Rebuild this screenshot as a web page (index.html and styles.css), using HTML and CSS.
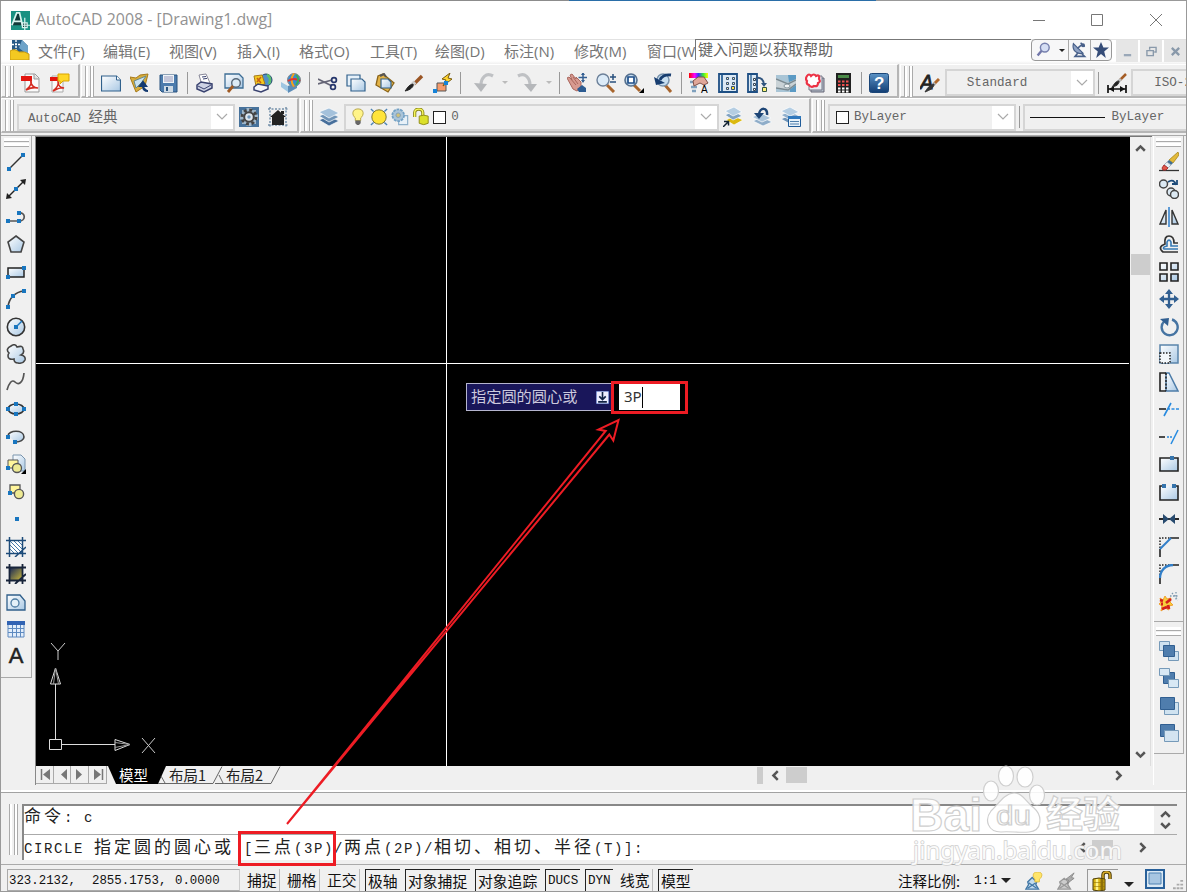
FILE: index.html
```
<!DOCTYPE html>
<html lang="zh-CN">
<head>
    <meta charset="UTF-8" />
    <meta name="viewport" content="width=device-width, initial-scale=1.0" />
    <title>AutoCAD 2008 - [Drawing1.dwg]</title>
    <link rel="stylesheet" href="styles.css">
</head>
<body>
    <!-- icon sprite -->
    <svg class="sprite">
        <defs>
            <linearGradient id="gBlue" x1="0" y1="0" x2="1" y2="1"><stop offset="0" stop-color="#fff"/><stop offset="1" stop-color="#a9c8e4"/></linearGradient>
            <linearGradient id="gDark" x1="0" y1="0" x2="1" y2="1"><stop offset="0" stop-color="#1c2a55"/><stop offset="1" stop-color="#c9b73c"/></linearGradient>
            <linearGradient id="gHelp" x1="0" y1="0" x2="0" y2="1"><stop offset="0" stop-color="#5b93c6"/><stop offset="1" stop-color="#123e74"/></linearGradient>
            <linearGradient id="gRain" x1="0" y1="0" x2="1" y2="0"><stop offset="0" stop-color="#f00"/><stop offset=".3" stop-color="#f0f"/><stop offset=".5" stop-color="#33f"/><stop offset=".75" stop-color="#3e3"/><stop offset="1" stop-color="#ff0"/></linearGradient>
        </defs>
        <symbol id="pdf" viewBox="0 0 20 20"><path d="M4 1h10l4 4v14H4z" fill="#fafafa" stroke="#999"/><path d="M13 1v5h5" fill="#ddd" stroke="#999"/><path d="M0 3h11v5H0z" fill="#e3150f"/><path d="M5 17c4-3 6-6 5-10-1 5 3 8 7 8-4-1-8 0-12 2" fill="none" stroke="#d42a20" stroke-width="1.600"/></symbol>
        <symbol id="pdf-note" viewBox="0 0 20 20"><path d="M2 3h11v16H2z" fill="#fafafa" stroke="#aaa"/><path d="M0 4h9v4H0z" fill="#e3150f"/><path d="M3 18c4-3 6-6 5-10 0 5 3 7 6 7-4-1-7 1-11 3" fill="none" stroke="#d42a20" stroke-width="1.600"/><path d="M8 1h11v7h-6l-3 3V8H8z" fill="#ffd727" stroke="#d9a400"/></symbol>
        <symbol id="new" viewBox="0 0 20 20"><path d="M.5 3h15l4 4v11H.5z" fill="url(#gBlue)" stroke="#31618c" stroke-width="1.200"/><path d="M15.500 3v4h4" fill="#fff" stroke="#31618c"/></symbol>
        <symbol id="open" viewBox="0 0 20 20"><path d="M0 4l6 1 4-3 8-1-3 12-9 6z" fill="#d6ad3d" stroke="#a77a1a"/><path d="M4 8l12-5-4 6-6 6z" fill="#c9e2f2" stroke="#688"/><path d="M18 18c-3 0-5-1-5-5M10 13l3-4 3 4z" fill="#133a70" stroke="#133a70" stroke-width="2"/></symbol>
        <symbol id="save" viewBox="0 0 20 20"><path d="M1 2h17v17H3l-2-2z" fill="#4d7cad" stroke="#28537f"/><path d="M4 2h11v8H4z" fill="#eef4f8"/><path d="M5 4h9M5 6h9M5 8h9" stroke="#99b"/><path d="M5 13h9v6H5z" fill="#cfdbe5"/><path d="M7 14h2v4H7z" fill="#28537f"/></symbol>
        <symbol id="print" viewBox="0 0 20 20"><path d="M4 2l7-1 4 9-8 2z" fill="#fff" stroke="#889"/><path d="M2 12l4-3 11 2v4l-8 4-7-3z" fill="#cdd2e4" stroke="#39426f" stroke-width="1.500"/><path d="M3 13l6 3 7-4M7 4l4-.5M8 6l4-.6" fill="none" stroke="#39426f"/></symbol>
        <symbol id="preview" viewBox="0 0 20 20"><path d="M1 1h14l4 4v10H1z" fill="url(#gBlue)" stroke="#3d6d95" stroke-width="1.300"/><circle cx="12" cy="10" r="4.300" fill="#dcebf5" stroke="#567" stroke-width="1.400"/><path d="M9 13l-5 6" stroke="#a05a23" stroke-width="2.800"/></symbol>
        <symbol id="publish" viewBox="0 0 20 20"><circle cx="13" cy="7" r="6" fill="#4f8fca" stroke="#246"/><path d="M14 2c3 1 4 5 2 9" stroke="#5bc06b" stroke-width="2.500" fill="none"/><path d="M1 3l8-1 3 9-9 2z" fill="#f4c91f" stroke="#a77a1a"/><path d="M4 5l4 5M8 4l-4 5" stroke="#c86010" stroke-width="1.500"/><path d="M1 14l4-3 10 2v3l-7 3-7-2z" fill="#f5f6fb" stroke="#39426f" stroke-width="1.500"/></symbol>
        <symbol id="dwf" viewBox="0 0 20 20"><path d="M0 9l7 4v6l-7-5z" fill="#9fc6e2"/><path d="M7 13l9-4v6l-9 5z" fill="#5d8db8"/><circle cx="13" cy="7" r="6.500" fill="#3b8bd0" stroke="#888"/><path d="M13 .5c-3 4-3 9 0 13" stroke="#f5a11c" stroke-width="2" fill="none"/><path d="M7 8q6-4 12 0" stroke="#d33" stroke-width="2" fill="none"/><path d="M15 2c3 2 3 6 0 10" fill="none" stroke="#3bb050" stroke-width="2"/></symbol>
        <symbol id="cut" viewBox="0 0 20 20"><path d="M0 6l14 7M0 11l14-4" stroke="#667" stroke-width="1.700"/><circle cx="16" cy="7" r="2.400" fill="none" stroke="#26366c" stroke-width="1.700"/><circle cx="15" cy="14" r="2.400" fill="none" stroke="#26366c" stroke-width="1.700"/></symbol>
        <symbol id="copy" viewBox="0 0 20 20"><path d="M1 2h13v11H1z" fill="#e6f1fa" stroke="#31618c" stroke-width="1.200"/><path d="M5 6h11l3 3v9H5z" fill="url(#gBlue)" stroke="#31618c" stroke-width="1.200"/></symbol>
        <symbol id="paste" viewBox="0 0 20 20"><path d="M8 1l11 9-6 9-12-7 2-9z" fill="#e3b347" stroke="#8b6418" stroke-width="1.300"/><path d="M6 6h7l3 3v6H6z" fill="url(#gBlue)" stroke="#31618c" stroke-width="1.200"/><path d="M5 3l4-2 2 3" fill="none" stroke="#555" stroke-width="2"/></symbol>
        <symbol id="brush" viewBox="0 0 20 20"><path d="M18 3l-8 8" stroke="#9a5524" stroke-width="3.400"/><path d="M11 9l-3 3" stroke="#ccc" stroke-width="4"/><path d="M9 11c1 3-3 6-8 7 2-2 3-6 8-7" fill="#222" stroke="#222"/></symbol>
        <symbol id="block" viewBox="0 0 20 20"><path d="M4 10h9v8H4z" fill="#f59b6c" stroke="#555"/><path d="M17 0L9 6l4 1-3 6 9-7-4-1z" fill="#ffd52d" stroke="#775a12"/><path d="M0 16h4v4H0zM11 8h4v4h-4z" fill="#1583d8"/></symbol>
        <symbol id="undo" viewBox="0 0 20 20"><path d="M19 3C12-1 7 5 7 12" fill="none" stroke="#bfc1c4" stroke-width="3.200"/><path d="M0 10l13 1-6 8z" fill="#b5b7ba"/></symbol>
        <symbol id="redo" viewBox="0 0 20 20"><path d="M1 3c7-4 12 2 12 9" fill="none" stroke="#bfc1c4" stroke-width="3.200"/><path d="M7 11h13l-6 8z" fill="#b5b7ba"/></symbol>
        <symbol id="pan" viewBox="0 0 20 20"><path d="M0 5l2-1 3 3-2-5 2-1 4 5 0-2 5 5 0 6-4 3-4-2z" fill="#d89a90" stroke="#a9665d"/><path d="M3 5l6 7M6 4l5 7" stroke="#a9665d"/><path d="M10 16l5-4 4 3v4h-7z" fill="#2c5b91"/><path d="M16 0v9M11.500 4.500h9" stroke="#345f92" stroke-width="1.500"/><path d="M16-1l2 3h-4zM16 10l2-3h-4z" fill="#345f92"/></symbol>
        <symbol id="zoom-rt" viewBox="0 0 20 20"><path d="M11 12l7 7" stroke="#a8652d" stroke-width="3"/><circle cx="7" cy="7" r="6" fill="#dcebf8" stroke="#6c8099" stroke-width="1.400"/><path d="M17 1v6M14 4h6M14 9h6" stroke="#29507d" stroke-width="1.500"/></symbol>
        <symbol id="zoom-win" viewBox="0 0 20 20"><path d="M10 12l6 6" stroke="#a8652d" stroke-width="3"/><circle cx="7" cy="7" r="6" fill="#c8dff1" stroke="#55708f" stroke-width="1.600"/><path d="M4 4h6v6H4z" fill="#fff" stroke="#1f4f8a" stroke-width="1.700"/><path d="M20 15v5h-5z"/></symbol>
        <symbol id="zoom-prev" viewBox="0 0 20 20"><path d="M12 12l6 7" stroke="#a8652d" stroke-width="3"/><circle cx="10" cy="7" r="6" fill="#c8dff1" stroke="#7892ac" stroke-width="1.500"/><path d="M18 2c-6-1-10 2-11 5" fill="none" stroke="#173d70" stroke-width="2.800"/><path d="M1 4l11 6-9 2z" fill="#173d70"/></symbol>
        <symbol id="center" viewBox="0 0 20 20"><path d="M1 1h18v18H1z" fill="#dce9f4" stroke="#1e4f84" stroke-width="1.800"/><path d="M4 2v16" stroke="#3c6f9f" stroke-width="2"/><g fill="#f7f1b0" stroke="#354f72"><path d="M8.500 4.500h2v2h-2zM14.500 4.500h2v2h-2zM8.500 9.500h2v2h-2zM14.500 9.500h2v2h-2zM8.500 14.500h2v2h-2z"/><path d="M13.500 13.500h3v3h-3z" fill="#ffe135"/></g></symbol>
        <symbol id="palette" viewBox="0 0 20 20"><path d="M1 1h9v18H1z" fill="#dce9f4" stroke="#1e4f84" stroke-width="1.800"/><path d="M4 2v16" stroke="#3c6f9f" stroke-width="1.500"/><path d="M6.500 5.500h2v2h-2zM6.500 10.500h2v2h-2zM6.500 15.500h2v2h-2z" fill="#fff" stroke="#345"/><path d="M9 5c5-1 8 2 8 7" fill="none" stroke="#30557f" stroke-width="2"/><path d="M14 10h6l-3 4z" fill="#30557f"/><path d="M15.500 14.500h4v4h-4z" fill="#fff176" stroke="#354"/></symbol>
        <symbol id="sheet" viewBox="0 0 20 20"><path d="M0 2h20v17H0z" fill="#a9c5d6"/><path d="M12 2h8v5l-7 2zM14 15l6-4v8h-6z" fill="#5b9ac4"/><path d="M0 5l12 5 8-4v6l-7 5-13-1z" fill="#c9d2d6"/><path d="M0 6l12 5 8-4M0 15l12 2 8-6" fill="none" stroke="#7a8a92" stroke-width="1.500"/><ellipse cx="11" cy="13" rx="3" ry="2" fill="#f2f4f5" stroke="#83949c"/></symbol>
        <symbol id="markup" viewBox="0 0 20 20"><path d="M6 5h13v14H6z" fill="#b3bec9" stroke="#667"/><path d="M4 3h13v14H4z" fill="#e7edf2" stroke="#778"/><path d="M2 3q2-3 4 0 3-3 5 0 4-2 3 3 2 3-1 4 0 4-4 3-3 2-5-1-3-1-2-4-2-2 0-5z" fill="#fff" stroke="#ec3245" stroke-width="2.200"/></symbol>
        <symbol id="calc" viewBox="0 0 20 20"><path d="M3 0h15v20H3z" fill="#202020"/><path d="M5 2h11v3H5z" fill="#4a8a48"/><g stroke-dasharray="2.500 1.500" stroke-width="2"><path d="M5 8.500h11M5 12h11" stroke="#f05050"/><path d="M5 15.500h11M5 18.500h11" stroke="#fff"/></g></symbol>
        <symbol id="dimstyle" viewBox="0 0 20 20"><path d="M1 12v8M19 12v8M1 16h18" fill="none" stroke="#111" stroke-width="1.700"/><path d="M2 16l5-3v6zM18 16l-5-3v6z" fill="#111"/><path d="M19 1l-6 6" stroke="#a55d25" stroke-width="2.500"/><path d="M14 6l-3 3" stroke="#bbb" stroke-width="3"/><path d="M12 8c0 4-3 5-7 6 2-2 3-6 7-6" fill="#222" stroke="#333"/></symbol>
        <symbol id="gear" viewBox="0 0 20 20"><path d="M0 0h20v20H0z" fill="#47729b"/><path d="M3 3h14v14H3z" fill="#9fb6c9"/><path d="M10 1v18M1 10h18" stroke="#9fb6c9" stroke-width="5"/><circle cx="10" cy="10" r="7" fill="none" stroke="#444" stroke-width="3" stroke-dasharray="2.900 2.600"/><circle cx="10" cy="10" r="4.800" fill="#dfe7ee" stroke="#444" stroke-width="2"/><circle cx="10" cy="10" r="1.700" fill="#6c93b8"/></symbol>
        <symbol id="home" viewBox="0 0 20 20"><path d="M2 0v20M18 0v20M0 2h20M0 18h20" stroke="#7490a9" stroke-dasharray="2 1.500" stroke-width="1.500"/><path d="M10 3l8 7h-2v8H4v-8H2z" fill="#222"/><path d="M13 4h3v3h-3z" fill="#222"/></symbol>
        <symbol id="layers" viewBox="0 0 20 20"><g stroke="#fff" stroke-width=".7"><path d="M0 13l10-4 10 5-10 5z" fill="#476f9b"/><path d="M0 9l10-4 10 5-10 5z" fill="#7094b7"/><path d="M0 5l10-4 10 5-10 5z" fill="#a4c1db"/></g></symbol>
        <symbol id="layer-cur" viewBox="0 0 20 20"><g stroke="#fff" stroke-width=".7"><path d="M3 13l8-4 9 4-9 5z" fill="#dbb90f"/><path d="M2 8l9-4 8 5-9 4z" fill="#80a2c2"/><path d="M2 4l9-4 8 5-9 4z" fill="#b4cde2"/></g><path d="M0 20l5-5M1 14.500h4.500v4" fill="none" stroke="#123" stroke-width="1.500"/></symbol>
        <symbol id="layer-prev" viewBox="0 0 20 20"><g stroke="#fff" stroke-width=".7"><path d="M1 14l9-4 10 5-9 4z" fill="#8fadc9"/><path d="M0 10l9-4 10 5-9 4z" fill="#a9c3da"/></g><path d="M15 8c1-8-7-8-8-1" fill="none" stroke="#1d4576" stroke-width="2.500"/><path d="M2 6h10l-5 6z" fill="#1d4576"/></symbol>
        <symbol id="layer-state" viewBox="0 0 20 20"><g stroke="#fff" stroke-width=".7"><path d="M0 12l9-4 8 5-8 4z" fill="#7094b7"/><path d="M0 8l9-4 9 5-9 4z" fill="#93b1cd"/><path d="M0 4l9-4 9 5-9 4z" fill="#b5cee3"/></g><path d="M7.500 9.500h12v10h-12z" fill="#e8f2fa" stroke="#1f5b98"/><path d="M7 9h13v3H7z" fill="#2f78bd"/><path d="M9 14.500h9M9 17h9" stroke="#4f7fac"/></symbol>
        <symbol id="bulb" viewBox="0 0 20 20"><path d="M10 1c-7 0-7 7-3 10v3h6v-3c4-3 4-10-3-10z" fill="#fff489" stroke="#b2a040"/><path d="M7 14h6v3l-2 2H9l-2-2z" fill="#666"/></symbol>
        <symbol id="sun" viewBox="0 0 20 20"><path d="M1 1l3 3M19 1l-3 3M1 19l3-3M19 19l-3-3" stroke="#4b83b5" stroke-width="1.500"/><circle cx="10" cy="10" r="8" fill="#ffe43b" stroke="#716b28"/></symbol>
        <symbol id="freeze" viewBox="0 0 20 20"><path d="M8.500 8.500h10v10h-10z" fill="#e8f1f8" stroke="#8eb0ca" stroke-width="1.300"/><circle cx="8" cy="8" r="6.500" fill="#aac4d9" stroke="#73a1c5" stroke-width="2" stroke-dasharray="3 1"/><circle cx="8" cy="8" r="2.500" fill="#d1c17a" stroke="#7c9ebc"/></symbol>
        <symbol id="lock" viewBox="0 0 20 20"><path d="M3 10V5c0-5 9-5 9 0v4" fill="none" stroke="#8b8716" stroke-width="3.500"/><path d="M3 10V5c0-5 9-5 9 0v4" fill="none" stroke="#fafa5f" stroke-width="1.500"/><path d="M8 9q5-2 10 0v8q-5 3-10 0z" fill="#dbe02b" stroke="#8b8716"/></symbol>
        <symbol id="line" viewBox="0 0 20 20"><path d="M3 17L17 3" stroke="#333" stroke-width="1.500"/><path d="M1 15h4v4H1zM15 1h4v4h-4z" fill="#1976bf"/></symbol>
        <symbol id="xline" viewBox="0 0 20 20"><path d="M2 18L18 2" stroke="#222" stroke-width="1.500"/><path d="M0 20l1-6 5 5zM20 0l-6 1 5 5z" fill="#222"/><path d="M8 8h4v4H8z" fill="#1976bf"/></symbol>
        <symbol id="pline" viewBox="0 0 20 20"><path d="M2 14h11M13 6c7-1 7 8 0 8" fill="none" stroke="#555" stroke-width="1.700"/><path d="M0 12h4v4H0zM11 12h4v4h-4zM11 4h4v4h-4z" fill="#1976bf"/></symbol>
        <symbol id="polygon" viewBox="0 0 20 20"><path d="M10 2l8 6-3 10H5L2 8z" fill="url(#gBlue)" stroke="#444" stroke-width="1.600"/></symbol>
        <symbol id="rect" viewBox="0 0 20 20"><path d="M2 6h16v9H2z" fill="url(#gBlue)" stroke="#222" stroke-width="1.500"/><path d="M0 13h4v4H0zM16 4h4v4h-4z" fill="#1976bf"/></symbol>
        <symbol id="arc" viewBox="0 0 20 20"><path d="M2 18C3 9 9 3 18 2" fill="none" stroke="#444" stroke-width="1.700"/><path d="M0 16h4v4H0zM5 5h4v4H5zM16 0h4v4h-4z" fill="#1976bf"/></symbol>
        <symbol id="circle" viewBox="0 0 20 20"><circle cx="10" cy="10" r="8.700" fill="url(#gBlue)" stroke="#333" stroke-width="1.600"/><path d="M10 10l6-6" stroke="#1976bf" stroke-width="1.500"/><path d="M8 8h4v4H8z" fill="#1976bf"/></symbol>
        <symbol id="cloud" viewBox="0 0 20 20"><path d="M5 2q4-3 6 1 6-2 6 2 2 4-2 6 5 1 4 5-2 4-7 3-4 0-4-4-6 1-6-3 0-2 1-3-4-4 2-7z" fill="url(#gBlue)" stroke="#444" stroke-width="1.600"/></symbol>
        <symbol id="spline" viewBox="0 0 20 20"><path d="M1 18c2-7 5-11 8-8s8 2 9-9" fill="none" stroke="#555" stroke-width="1.700"/></symbol>
        <symbol id="ellipse" viewBox="0 0 20 20"><ellipse cx="10" cy="10" rx="8" ry="5" fill="url(#gBlue)" stroke="#333" stroke-width="1.600"/><path d="M0 8h4v4H0zM16 8h4v4h-4zM8 3h4v4H8zM8 13h4v4H8z" fill="#1976bf"/></symbol>
        <symbol id="earc" viewBox="0 0 20 20"><path d="M2 9c0-6 16-7 16 1 0 3-4 5-8 5" fill="url(#gBlue)" stroke="#444" stroke-width="1.600"/><path d="M0 8h4v4H0zM7 13h4v4H7z" fill="#1976bf"/></symbol>
        <symbol id="insert" viewBox="0 0 20 20"><path d="M7 1h8l4 4v12H7z" fill="url(#gBlue)" stroke="#7894ad"/><path d="M2 6h10v8H2z" fill="#fff59b" stroke="#555"/><circle cx="11" cy="14" r="4.500" fill="#eeea93" stroke="#555" stroke-width="1.300"/><path d="M0 12h4v4H0z" fill="#1976bf"/><path d="M20 15v5h-5z"/></symbol>
        <symbol id="mkblock" viewBox="0 0 20 20"><path d="M4 3h10v8H4z" fill="#fff59b" stroke="#555" stroke-width="1.300"/><circle cx="13" cy="12" r="4.600" fill="#eeea93" stroke="#555" stroke-width="1.400"/><path d="M2 9h4v4H2z" fill="#1976bf"/></symbol>
        <symbol id="point" viewBox="0 0 20 20"><path d="M9 8h4v4H9z" fill="#1976bf"/></symbol>
        <symbol id="hatch" viewBox="0 0 20 20"><path d="M4 4h12v12H4z" fill="#fff"/><path d="M4 4l12 12M8 4l8 8M4 8l8 8M12 4l4 4M4 12l4 4" stroke="#4778a5"/><path d="M3.500 0v20M16.500 0v20M0 3.500h20M0 16.500h20M20 10L9 20" stroke="#1d4b79" stroke-width="1.500"/></symbol>
        <symbol id="gradient" viewBox="0 0 20 20"><path d="M4 4h12v12H4z" fill="url(#gDark)"/><path d="M3.500 0v20M16.500 0v20M0 3.500h20M0 16.500h20M20 10L9 20" stroke="#18243a" stroke-width="1.800"/></symbol>
        <symbol id="region" viewBox="0 0 20 20"><path d="M1 3h13l5 6v9H1z" fill="url(#gBlue)" stroke="#305f8a" stroke-width="1.300"/><circle cx="9" cy="11" r="4" fill="#e4f0f8" stroke="#4d7ba2" stroke-width="1.300"/></symbol>
        <symbol id="table" viewBox="0 0 20 20"><path d="M2 3h16v15H2z" fill="#e3eefb" stroke="#5e8ac0"/><path d="M1 2h18v4H1z" fill="#3163b3"/><path d="M2 9.500h16M2 13.500h16M6.500 6v12M10.500 6v12M14.500 6v12" stroke="#5e8ac0"/></symbol>
        <symbol id="erase" viewBox="0 0 20 20"><path d="M0 18.500h20" stroke="#333" stroke-width="1.300"/><path d="M19 0l1 3-6 8-4-3z" fill="#e2b93a" stroke="#a5841c" stroke-width=".8"/><path d="M10 8l4 3-2 2-4-3z" fill="#3f6f95"/><path d="M8 10l4 3-3 3-4-3z" fill="#e7eff4" stroke="#89a" stroke-width=".7"/><path d="M5 13l4 3-2 2H4l-1-2z" fill="#e2574a" stroke="#a33"/></symbol>
        <symbol id="cpy" viewBox="0 0 20 20"><g fill="#dce9f3" stroke="#444" stroke-width="1.500"><circle cx="4.500" cy="5" r="4"/><circle cx="12" cy="13" r="4"/><circle cx="15.500" cy="15.500" r="4"/></g><path d="M9 3c4-3 7-1 8 3M13 5h5V1" fill="none" stroke="#1d4b79" stroke-width="1.800"/></symbol>
        <symbol id="mirror" viewBox="0 0 20 20"><path d="M7 3v14H1zM13 3v14h6z" fill="url(#gBlue)" stroke="#333" stroke-width="1.400"/><path d="M10 0v20" stroke="#438bd0" stroke-width="1.700"/></symbol>
        <symbol id="offset" viewBox="0 0 20 20"><path d="M19 18H4q-6-5 2-8Q5 2 10 2t5 7h4" fill="none" stroke="#333" stroke-width="1.700"/><path d="M19 15H5q-2-2 3-3V8q2-4 4 0v4h7" fill="none" stroke="#3579b5" stroke-width="1.600"/></symbol>
        <symbol id="array" viewBox="0 0 20 20"><path d="M1 1h7v7H1zM12 1h7v7h-7zM1 12h7v7H1zM12 12h7v7h-7z" fill="url(#gBlue)" stroke="#222" stroke-width="1.600"/></symbol>
        <symbol id="move" viewBox="0 0 20 20"><path d="M10 2v16M2 10h16" stroke="#315f91" stroke-width="2.300"/><path d="M10 0l4 5H6zM10 20l4-5H6zM0 10l5-4v8zM20 10l-5-4v8z" fill="#315f91"/></symbol>
        <symbol id="rotate" viewBox="0 0 20 20"><path d="M5 4.500a8 8 0 1 0 8-2" fill="none" stroke="#4674a2" stroke-width="2.400"/><path d="M1 2l9-1-1 8z" fill="#315f91"/></symbol>
        <symbol id="scale" viewBox="0 0 20 20"><path d="M1 1h18v18H1z" fill="url(#gBlue)" stroke="#5984aa" stroke-width="1.500"/><path d="M1 9h10v10H1z" fill="#f3f7fa" stroke="#222" stroke-width="1.500" stroke-dasharray="1.500 1.500"/></symbol>
        <symbol id="stretch" viewBox="0 0 20 20"><path d="M7 1h3l9 18H7z" fill="url(#gBlue)" stroke="#4d7ca8" stroke-width="1.500"/><path d="M7 1H1v18h6" fill="none" stroke="#222" stroke-width="1.600"/><path d="M7 1v18" stroke="#222" stroke-dasharray="2 1.500" stroke-width="1.500"/></symbol>
        <symbol id="trim" viewBox="0 0 20 20"><path d="M0 10h7" stroke="#222" stroke-width="1.600"/><path d="M12 4L5 17M9 10h2M12.500 10h3M17 10h3" stroke="#288be0" stroke-width="1.600"/></symbol>
        <symbol id="extend" viewBox="0 0 20 20"><path d="M0 10h6" stroke="#222" stroke-width="1.600"/><path d="M8 10h6" stroke="#288be0" stroke-width="1.600" stroke-dasharray="2 1"/><path d="M19 3l-7 14" stroke="#288be0" stroke-width="1.600"/></symbol>
        <symbol id="breakpt" viewBox="0 0 20 20"><path d="M1 4h18v13H1z" fill="url(#gBlue)" stroke="#222" stroke-width="1.600"/><path d="M11 2h4v4h-4z" fill="#3574ac"/></symbol>
        <symbol id="break" viewBox="0 0 20 20"><path d="M1 4h18v14H1z" fill="url(#gBlue)"/><path d="M4 4H1v14h18V4h-3" fill="none" stroke="#222" stroke-width="1.600"/><path d="M3 2h4v4H3zM13 2h4v4h-4z" fill="#3574ac"/></symbol>
        <symbol id="join" viewBox="0 0 20 20"><path d="M0 10h20" stroke="#111" stroke-width="1.800"/><path d="M4 5l6 5-6 5zM16 5l-6 5 6 5z" fill="#284b6f"/></symbol>
        <symbol id="chamfer" viewBox="0 0 20 20"><path d="M1 11V1h10" fill="none" stroke="#222" stroke-dasharray="1.500 1.500" stroke-width="1.500"/><path d="M11 1h9M1 12v8" stroke="#222" stroke-width="1.600"/><path d="M1 12L12 1" stroke="#327fc9" stroke-width="1.900"/></symbol>
        <symbol id="fillet" viewBox="0 0 20 20"><path d="M1 11V1h10" fill="none" stroke="#222" stroke-dasharray="1.500 1.500" stroke-width="1.500"/><path d="M12 1h8M1 14v6" stroke="#222" stroke-width="1.600"/><path d="M1 14C1 7 6 1 14 1" fill="none" stroke="#327fc9" stroke-width="2.400"/></symbol>
        <symbol id="explode" viewBox="0 0 20 20"><path d="M1 6l3 2 2-4 2 3 4-1-1 4 3 3-4 1 0 4-4-2-4 3 1-5-3-2 2-2z" fill="#f6cf3c" stroke="#f0a030"/><path d="M3 17l5-2M1 8l3 1M2 12l2 0M9 13l1 4M7 11l5-4" stroke="#d3201c" stroke-width="2.800"/><path d="M11 4h9M13 1l6 7M17 0v8" stroke="#7d98ad" stroke-dasharray="1.500 1.500" stroke-width="1.300"/></symbol>
        <symbol id="front" viewBox="0 0 20 20"><path d="M.5.5h10v9H.5zM9.500 10.500h10v9h-10z" fill="#cfe2f0" stroke="#769ab9"/><path d="M4.500 4.500h11v11h-11z" fill="#4f7dad" stroke="#315f91"/></symbol>
        <symbol id="back" viewBox="0 0 20 20"><path d="M4.500 4.500h11v11h-11z" fill="#4f7dad" stroke="#315f91"/><path d="M.5.500h10v7H.5zM9.500 11.500h10v8h-10z" fill="#d8e8f4" stroke="#769ab9"/></symbol>
        <symbol id="above" viewBox="0 0 20 20"><path d="M5.500 6.500h14v12h-14z" fill="#cfe2f0" stroke="#769ab9"/><path d="M1.500 1.500h14v12h-14z" fill="#4f7dad" stroke="#315f91"/></symbol>
        <symbol id="under" viewBox="0 0 20 20"><path d="M1.500 1.500h14v12h-14z" fill="#4f7dad" stroke="#315f91"/><path d="M5.500 7.500h14v11h-14z" fill="#d3e4f1" stroke="#769ab9"/></symbol>
        <symbol id="app" viewBox="0 0 20 20"><path d="M0 0h20v20H0z" fill="#1a9182"/><path d="M1 15L6 2l3 0 3 13M3 11h8" fill="#123a3a" stroke="#d8f5ef" stroke-width="1.800"/><path d="M11 15h9M14.500 7v13M12 12.500h5v5h-5z" stroke="#d8f5ef" stroke-width="1.300" fill="#123a3a"/></symbol>
        <symbol id="doc" viewBox="0 0 20 20"><path d="M2 0h10l6 6v10H2z" fill="#285a86"/><path d="M12 0l6 6v9L9 8z" fill="#6da3c9"/><path d="M6 0v10M2 4.500h9" stroke="#fff" stroke-width="1.400" stroke-dasharray="2 1"/><path d="M0 11q5-3 9 1 6-1 10 2v6H0z" fill="#f4c921" stroke="#c89a11"/></symbol>
        <symbol id="find" viewBox="0 0 20 20"><path d="M7 11l-5 6" stroke="#7277aa" stroke-width="3"/><circle cx="11" cy="7" r="5.500" fill="#d5def4" stroke="#7781ae" stroke-width="1.800"/></symbol>
        <symbol id="dish" viewBox="0 0 20 20"><path d="M3 2c-2 8 4 14 12 12z" fill="#8fa2c4" stroke="#48608a" stroke-width="1.500"/><path d="M8 8l6-5M12 1l5 5M9 13l-4 5h12l-4-4" fill="none" stroke="#48608a" stroke-width="2"/><circle cx="15" cy="4" r="2.500" fill="#48608a"/></symbol>
        <symbol id="star" viewBox="0 0 20 20"><path d="M10 0l3 7h7l-6 5 2 8-6-5-6 5 2-8-6-5h7z" fill="#354c78"/></symbol>
        <symbol id="annovis" viewBox="0 0 20 20"><path d="M1 19l3-5-1-3 5-5 5 5-1 3 3 5z" fill="#c3dbed" stroke="#4177a6" stroke-width="1.500"/><path d="M4 12l9 6M12 12l-9 6" stroke="#4177a6" stroke-width="1.500"/><path d="M14 0c-7 0-5 6-3 8v3h5V8c3-2 5-8-2-8z" fill="#ffe56a" stroke="#e0bc40"/></symbol>
        <symbol id="annoauto" viewBox="0 0 20 20"><path d="M1 19l3-5-1-3 5-4 5 4-1 3 3 5z" fill="#ccc" stroke="#999" stroke-width="1.500"/><path d="M4 12l9 6M12 12l-9 6" stroke="#999" stroke-width="1.500"/><path d="M19 1l-9 7 3 1-2 4 8-6-3-1z" fill="#aaa" stroke="#888"/></symbol>
        <symbol id="padlock" viewBox="0 0 20 20"><path d="M11 9V4c0-4 7-4 7 0v4" fill="none" stroke="#4d3d08" stroke-width="3.500"/><path d="M11 9V4c0-4 7-4 7 0v4" fill="none" stroke="#ddb02c" stroke-width="1.400"/><path d="M1 8q6-2 12 0v11q-6 2-12 0z" fill="#d9b412" stroke="#4d3d08"/><path d="M5 8v11" stroke="#fff38a" stroke-width="2.500"/><path d="M10 8v11" stroke="#8e7008" stroke-width="3"/><path d="M1 11.500h12M1 15.500h12" stroke="#8e7008" stroke-width=".6"/></symbol>
        <symbol id="clean" viewBox="0 0 20 20"><path d="M1 1h18v18H1z" fill="#d9e8f4" stroke="#28609a" stroke-width="2"/><path d="M4 4h12v11H4z" fill="#a7c6e2" stroke="#4e82b3"/></symbol>
        <symbol id="chev" viewBox="0 0 12 8"><path d="M1 1l5 5 5-5" fill="none" stroke="currentColor" stroke-width="1.200"/></symbol>
        <symbol id="arrow" viewBox="0 0 12 12"><path d="M2 3l4 4 4-4" fill="none" stroke="#555" stroke-width="2.300"/></symbol>
    </svg>

    <div class="window">
        <div class="titlebar">
            <svg class="app-icon"><use href="#app"/></svg>
            <span class="title">AutoCAD 2008 - [Drawing1.dwg]</span>
            <svg class="win-buttons" viewBox="0 0 130 14"><path d="M0 7.500h12M58.500 1.500h11v11h-11zM117 1l12 12M129 1l-12 12" fill="none" stroke="#777"/></svg>
        </div>

        <div class="menubar">
            <svg class="doc-icon"><use href="#doc"/></svg>
            <nav class="menu">
                <span>文件(F)</span><span>编辑(E)</span><span>视图(V)</span><span>插入(I)</span><span>格式(O)</span><span>工具(T)</span><span>绘图(D)</span><span>标注(N)</span><span>修改(M)</span><span>窗口(W</span>
            </nav>
            <div class="ask">键入问题以获取帮助</div>
            <div class="info-center">
                <span class="find"><svg class="icon"><use href="#find"/></svg><i class="caret"></i></span>
                <span><svg class="icon"><use href="#dish"/></svg></span>
                <span><svg class="icon"><use href="#star"/></svg></span>
            </div>
            <div class="mdi">
                <span><svg viewBox="0 0 12 12"><path d="M2 10h8" stroke="#9aa8b8" stroke-width="2.500"/></svg></span>
                <span><svg viewBox="0 0 12 12"><path d="M4 4V1.500h7v5H9M1 5h7v5.500H1z" fill="none" stroke="#8999aa" stroke-width="1.500"/></svg></span>
                <span><svg viewBox="0 0 12 12"><path d="M2 2l8 8M10 2l-8 8" stroke="#8999aa" stroke-width="2.500"/></svg></span>
            </div>
        </div>

        <div class="toolrow">
            <div class="toolbar tb-pdf">
                <i class="grip"></i>
                <svg class="icon"><use href="#pdf"/></svg><svg class="icon"><use href="#pdf-note"/></svg>
            </div>
            <div class="toolbar tb-std">
                <i class="grip"></i>
                <svg class="icon"><use href="#new"/></svg><svg class="icon"><use href="#open"/></svg><svg class="icon"><use href="#save"/></svg><i class="sep"></i>
                <svg class="icon"><use href="#print"/></svg><svg class="icon"><use href="#preview"/></svg><svg class="icon"><use href="#publish"/></svg><svg class="icon"><use href="#dwf"/></svg><i class="sep"></i>
                <svg class="icon"><use href="#cut"/></svg><svg class="icon"><use href="#copy"/></svg><svg class="icon"><use href="#paste"/></svg><svg class="icon"><use href="#brush"/></svg><svg class="icon"><use href="#block"/></svg><i class="sep"></i>
                <svg class="icon wide"><use href="#undo"/></svg><i class="caret pale"></i><svg class="icon wide"><use href="#redo"/></svg><i class="caret pale"></i><i class="sep late"></i>
                <svg class="icon"><use href="#pan"/></svg><svg class="icon"><use href="#zoom-rt"/></svg><svg class="icon"><use href="#zoom-win"/></svg><svg class="icon"><use href="#zoom-prev"/></svg><i class="sep"></i>
                <svg class="icon" viewBox="0 0 20 20"><path d="M0 0h19v5H0z" fill="url(#gRain)"/><path d="M1 9h7M2 14h6M3 18h4" stroke="#7fa0bd" stroke-width="2.500"/><path d="M4 8l5-4h6l4 6-4 2-4-2-6 3z" fill="#e0a799" stroke="#805048"/><text x="12" y="20" font-size="10">A</text></svg>
                <svg class="icon"><use href="#center"/></svg><svg class="icon"><use href="#palette"/></svg><svg class="icon"><use href="#sheet"/></svg><svg class="icon"><use href="#markup"/></svg><svg class="icon"><use href="#calc"/></svg><i class="sep"></i>
                <svg class="icon" viewBox="0 0 20 20"><rect x=".5" y=".5" width="19" height="19" rx="2" fill="url(#gHelp)" stroke="#1b4678"/><text x="5" y="16" font-size="17" font-weight="bold" fill="#fff">?</text></svg>
            </div>
            <div class="toolbar tb-styles">
                <i class="grip"></i>
                <svg class="icon" viewBox="0 0 20 20"><text x="0" y="16" font-size="20" font-style="italic" fill="#222" stroke="#222" stroke-width=".8">A</text><path d="M19 6l-5 5" stroke="#b0682c" stroke-width="3"/><path d="M15 10l-2 2" stroke="#bbb" stroke-width="3.500"/><path d="M14 11c0 4-4 6-9 8 2-3 4-7 9-8" fill="#333" stroke="#333"/></svg>
                <div class="combo combo-text"><span>Standard</span><b><svg><use href="#chev"/></svg></b></div>
                <i class="sep"></i>
                <svg class="icon"><use href="#dimstyle"/></svg>
                <div class="combo combo-dim"><span>ISO-25</span></div>
            </div>
        </div>

        <div class="toolrow second">
            <div class="toolbar tb-work">
                <i class="grip"></i>
                <div class="combo combo-work"><span>AutoCAD <em>经典</em></span><b><svg><use href="#chev"/></svg></b></div>
                <svg class="icon"><use href="#gear"/></svg><svg class="icon"><use href="#home"/></svg>
            </div>
            <div class="toolbar tb-layers">
                <i class="grip"></i>
                <svg class="icon"><use href="#layers"/></svg>
                <div class="combo combo-layer">
                    <svg class="icon"><use href="#bulb"/></svg><svg class="icon"><use href="#sun"/></svg><svg class="icon"><use href="#freeze"/></svg><svg class="icon"><use href="#lock"/></svg><i class="swatch"></i>
                    <span>0</span><b><svg><use href="#chev"/></svg></b>
                </div>
                <svg class="icon"><use href="#layer-cur"/></svg><svg class="icon"><use href="#layer-prev"/></svg><svg class="icon"><use href="#layer-state"/></svg>
            </div>
            <div class="toolbar tb-props">
                <i class="grip"></i>
                <div class="combo combo-color"><i class="swatch"></i><span>ByLayer</span><b><svg><use href="#chev"/></svg></b></div>
                <i class="sep"></i>
                <div class="combo combo-ltype"><i class="ltype"></i><span>ByLayer</span></div>
            </div>
        </div>

        <div class="workspace">
            <div class="side side-left">
                <i class="grip-h"></i>
                <svg><use href="#line"/></svg><svg><use href="#xline"/></svg><svg><use href="#pline"/></svg><svg><use href="#polygon"/></svg><svg><use href="#rect"/></svg><svg><use href="#arc"/></svg><svg><use href="#circle"/></svg><svg><use href="#cloud"/></svg><svg><use href="#spline"/></svg><svg><use href="#ellipse"/></svg><svg><use href="#earc"/></svg><svg><use href="#insert"/></svg><svg><use href="#mkblock"/></svg><svg><use href="#point"/></svg><svg><use href="#hatch"/></svg><svg><use href="#gradient"/></svg><svg><use href="#region"/></svg><svg><use href="#table"/></svg>
                <span class="mtext">A</span>
            </div>

            <div class="drawing">
                <div class="view">
                    <div class="canvas">
                        <svg class="scene" viewBox="0 0 1094 629">
                            <path d="M0 226.500h1093M410.500 0v629" stroke="#fff"/>
                            <path d="M19.500 547v55M26 607.500h53M13.500 602.500h12v10h-12zM19.500 531l-5 16h10zM94 607.500l-15-5v11z" fill="none" stroke="#ddd"/>
                            <path d="M19.500 531l-2 16M19.500 531l3 16M94 607.500l-15-2M94 607.500l-15 3" stroke="#999"/>
                            <path d="M15 506l7 8 7-8M22 514v9M106 601l13 15M119 601l-13 15" fill="none" stroke="#ccc"/>
                        </svg>
                        <div class="prompt">
                            <span class="prompt-text">指定圆的圆心或</span>
                            <svg class="prompt-key" viewBox="0 0 12 12"><path d="M0 0h12v12H0z" fill="#eef" stroke="#2b4ba8"/><path d="M6 1v6M3 5l3 3 3-3M2 10h8" fill="none" stroke="#124" stroke-width="1.500"/></svg>
                        </div>
                        <div class="prompt-input">3P</div>
                    </div>
                    <div class="vscroll">
                        <svg class="up"><use href="#arrow"/></svg>
                        <i class="thumb"></i>
                        <svg class="down"><use href="#arrow"/></svg>
                    </div>
                </div>
                <div class="tabs">
                    <svg class="tab-nav" viewBox="0 0 72 18"><path d="M17.500 0v17M34.500 0v17M52.500 0v17M0 17.500h71M70.500 0v17" stroke="#aaa"/><path d="M5.500 3v11" stroke="#777" stroke-width="1.500"/><path d="M14 3v11L7 8.500zM31 3v11l-6-5.500zM40 3v11l6-5.500zM58 3v11l7-5.500z" fill="#777"/><path d="M66.500 3v11" stroke="#777" stroke-width="1.500"/></svg>
                    <svg class="tab-shapes" viewBox="0 0 180 18"><path d="M0 0h58l-8 18H8z" fill="#000"/><path d="M50 17.500h55l9-17M53 10l4 7M107 17.500h56l9-17M111 9l4 8" fill="none" stroke="#666"/><g class="tab-label"><text x="11" y="15" fill="#fff">模型</text><text x="61" y="15">布局1</text><text x="118" y="15">布局2</text></g></svg>
                    <i class="splitter"></i>
                    <svg class="left"><use href="#arrow"/></svg>
                    <i class="hthumb"></i>
                    <svg class="right"><use href="#arrow"/></svg>
                </div>
            </div>

            <div class="side-wrap">
                <div class="side side-right">
                    <i class="grip-h"></i>
                    <svg><use href="#erase"/></svg><svg><use href="#cpy"/></svg><svg><use href="#mirror"/></svg><svg><use href="#offset"/></svg><svg><use href="#array"/></svg><svg><use href="#move"/></svg><svg><use href="#rotate"/></svg><svg><use href="#scale"/></svg><svg><use href="#stretch"/></svg><svg><use href="#trim"/></svg><svg><use href="#extend"/></svg><svg><use href="#breakpt"/></svg><svg><use href="#break"/></svg><svg><use href="#join"/></svg><svg><use href="#chamfer"/></svg><svg><use href="#fillet"/></svg><svg><use href="#explode"/></svg>
                </div>
                <div class="side side-order">
                    <i class="grip-h"></i>
                    <svg><use href="#front"/></svg><svg><use href="#back"/></svg><svg><use href="#above"/></svg><svg><use href="#under"/></svg>
                </div>
            </div>
        </div>

        <div class="command">
            <i class="grip"></i>
            <div class="command-box">
                <div class="history">
                    <span><em>命令</em>: c</span>
                    <div class="mini-v"><svg class="up"><use href="#arrow"/></svg><svg><use href="#arrow"/></svg></div>
                </div>
                <div class="entry">
                    <span>CIRCLE <em>指定圆的圆心或</em> [<em>三点</em>(3P)/<em>两点</em>(2P)/<em>相切、相切、半径</em>(T)]:</span>
                    <div class="mini-h"><svg class="left"><use href="#arrow"/></svg><i class="hthumb"></i><svg class="right"><use href="#arrow"/></svg></div>
                </div>
            </div>
        </div>

        <div class="status">
            <div class="coords"><span>323.2132,</span><span>2855.1753,</span><span>0.0000</span></div>
            <div class="toggles">
                <span>捕捉</span><span>栅格</span><span>正交</span><span class="on">极轴</span><span class="on four">对象捕捉</span><span class="on four">对象追踪</span><span class="on mono">DUCS</span><span class="on mono dyn">DYN</span><span>线宽</span><span class="on">模型</span>
            </div>
            <div class="tray">
                <span class="scale-label">注释比例:</span><span class="scale-value">1:1</span><i class="caret"></i>
                <svg class="icon"><use href="#annovis"/></svg><svg class="icon"><use href="#annoauto"/></svg>
                <span class="lock-cell"><svg class="icon"><use href="#padlock"/></svg></span>
                <i class="caret low"></i>
                <svg class="icon clean"><use href="#clean"/></svg>
                <svg class="resize" viewBox="0 0 12 12"><path d="M8 1h3M4 5h3M8 5h3M0 9h3M4 9h3M8 9h3" stroke="#aaa" stroke-width="2"/></svg>
            </div>
        </div>
    </div>

    <!-- watermark and red callouts lie over the window -->
    <svg class="overlay" viewBox="0 0 1187 892">
        <g class="watermark">
            <text x="910" y="831" font-size="46" font-weight="bold" textLength="72" lengthAdjust="spacingAndGlyphs">Bai</text>
            <ellipse cx="991" cy="791" rx="7.500" ry="10"/><ellipse cx="1006" cy="776" rx="7.500" ry="10"/><ellipse cx="1025" cy="777" rx="8" ry="10"/><ellipse cx="1037" cy="795" rx="7.500" ry="10"/>
            <path d="M1014 793c9 0 12 9 20 15 9 8 8 23-5 24-9 1-20-1-28 0-13 0-17-12-10-21 8-8 14-18 23-18z"/>
            <text x="996" y="825" font-size="27" textLength="35" lengthAdjust="spacingAndGlyphs">du</text>
            <text class="cjk" x="1046" y="828" font-size="37" font-weight="bold">经验</text>
            <text class="site" x="913" y="859" font-size="23" textLength="209" lengthAdjust="spacingAndGlyphs">jingyan.baidu.com</text>
        </g>
        <g class="callout">
            <path d="M612.500 382.500h74v30h-74zM239.500 832.500h95v32h-95z" stroke-width="3"/>
            <path d="M287 824L605.700 431 598.300 429.500 618.500 420 613.300 440.500 609.300 434.500z" stroke-width="2"/>
        </g>
    </svg>
</body>
</html>
```
FILE: styles.css
```
:root {
    --face: #f0f0f0;
    --line: #a5a5a5;
    --gray-text: #666;
    --mono: "Liberation Mono", "Noto Sans CJK SC", monospace;
    --ui: "Open Sans", "Noto Sans CJK SC", sans-serif;
}

* {
    margin: 0;
    padding: 0;
    box-sizing: border-box;
}

body {
    width: 1187px;
    height: 892px;
    overflow: hidden;
    position: relative;
    font-family: var(--ui);
    background: linear-gradient(90deg, #8c8c8c 569px, #2a6ea8 569px, #2a6ea8 876px, #999 876px);
    padding-top: 1px;
}

i, em {
    font-style: normal;
}

svg {
    display: block;
    flex: none;
}

.sprite {
    position: absolute;
    width: 0;
    height: 0;
}

.window {
    height: 891px;
    background: var(--face);
    border-left: 1px solid #999;
    border-right: 1px solid #999;
    border-bottom: 1px solid #999;
    display: flex;
    flex-direction: column;
}

.icon {
    width: 20px;
    height: 20px;
    margin: 0 4.4px;
    font-family: "Liberation Sans", sans-serif;
}

.caret {
    flex: none;
    border: 4px solid transparent;
    border-top-color: #222;
    border-bottom: 0;
}

/* title and menu */
.titlebar {
    height: 38px;
    background: #fff;
    display: flex;
    align-items: center;
    padding-left: 10px;
}

.app-icon {
    width: 19px;
    height: 19px;
}

.title {
    margin: -2px 0 0 6px;
    font: 15.9px "Open Sans", sans-serif;
    color: #929292;
}

.win-buttons {
    width: 130px;
    height: 14px;
    margin-left: auto;
    margin-right: 23px;
}

.menubar {
    height: 25px;
    flex: none;
    display: flex;
    background: linear-gradient(#fff 21px, #f0f0f0);
    border-top: 1px solid #e2e2e2;
}

.doc-icon {
    width: 20px;
    height: 20px;
    margin: 0 0 0 9px;
}

.menu {
    width: 665px;
    padding-left: 8px;
    overflow: hidden;
    display: grid;
    grid-template-columns: 65px 66px 68px 62px 71px 65px 69px 70px 73px 60px;
    font-size: 15px;
    line-height: 22px;
    color: #757575;
    white-space: nowrap;
}

.ask {
    width: 336px;
    height: 21px;
    margin-top: -1px;
    border-left: 1px solid #777;
    border-top: 1px solid #777;
    background: #fff;
    padding-left: 2px;
    font-size: 15px;
    line-height: 18px;
    color: #666;
}

.info-center {
    width: 81px;
    height: 22px;
    margin-top: -1px;
    border: 1px solid #999;
    border-radius: 4px;
    display: flex;
    background: #f7f7f8;
}

.info-center span {
    flex: 1;
    display: flex;
    align-items: center;
    justify-content: center;
    border-left: 1px solid #aaa;
}

.info-center .find {
    flex: 0 0 36px;
    border: 0;
}

.info-center .icon {
    width: 16px;
    height: 16px;
    margin: 0;
}

.find .caret {
    border-width: 3px 3px 0;
    margin-left: 7px;
}

.mdi {
    margin-left: 4px;
    display: flex;
    gap: 2px;
}

.mdi span {
    width: 22px;
    height: 22px;
    background: #e6e6e6;
    display: flex;
    align-items: center;
    justify-content: center;
}

.mdi svg {
    width: 11px;
    height: 11px;
}

/* toolbars */
.toolrow {
    height: 34px;
    flex: none;
    display: flex;
    overflow: hidden;
}

.toolrow.second {
    height: 35px;
    margin-bottom: 2px;
}

.toolbar {
    flex: none;
    display: flex;
    align-items: center;
    border-top: 1px solid #fff;
    border-left: 1px solid #fff;
    border-right: 2px solid #b5b5b5;
    border-bottom: 2px solid #b5b5b5;
    margin-right: 1px;
    padding-top: 4px;
}

.grip {
    flex: none;
    width: 9px;
    height: 31px;
    margin: -3px 0 0 3px;
    border: solid #aaa;
    border-width: 0 1px;
    background: linear-gradient(90deg, #fff 2px, transparent 2px, transparent 4px, #aaa 4px, #aaa 5px, #fff 5px, #fff 7px, transparent 7px);
}

.sep {
    flex: none;
    width: 1px;
    height: 22px;
    margin: 0 3.2px;
    background: #999;
}

.sep.late {
    margin: 0 3px 0 7px;
}

.tb-pdf { width: 79px; }
.tb-pdf .grip { margin-right: 3px; }
.tb-std { width: 818px; }
.tb-std .grip { margin-right: 3px; }
.tb-styles { width: 300px; }
.tb-styles .grip { margin-right: 3px; }
.tb-work { width: 298px; }
.tb-work .grip { margin-right: 3px; }
.tb-layers { width: 511px; }
.tb-layers .grip { margin-right: 2px; }
.tb-props { width: 380px; }
.tb-props .grip { margin-right: 3px; }

.icon.wide {
    margin: 0 8.5px 0 9px;
}

.caret.pale {
    border-width: 3px 3px 0;
    border-top-color: #bbb;
}

.combo {
    flex: none;
    height: 27px;
    border: 2px solid #d5d5d5;
    display: flex;
    align-items: center;
    font: 12.6px var(--mono);
    color: var(--gray-text);
    white-space: nowrap;
}

.combo em {
    font-size: 14.5px;
}

.combo b {
    margin-left: auto;
    width: 22px;
    align-self: stretch;
    background: #fff;
    display: flex;
    align-items: center;
    justify-content: center;
    color: #aaa;
}

.combo b svg {
    width: 12px;
    height: 8px;
}

.combo-text { width: 150px; padding-left: 20px; }
.combo-text ~ .icon { margin-left: 5px; margin-right: 4px; }
.combo-dim { width: 90px; padding-left: 21px; }
.combo-work { width: 218px; padding-left: 9px; }
.combo-work > span { margin-top: -3px; }
.combo-layer { width: 375px; }
.combo-color { width: 188px; padding-left: 6px; }
.combo-ltype { width: 180px; padding-left: 5px; }

.combo-layer .icon {
    width: 18px;
    height: 18px;
    margin: 0 1.5px;
}

.combo-layer .icon:first-child {
    margin-left: 3px;
}

.swatch {
    flex: none;
    width: 13px;
    height: 13px;
    border: 1.5px solid #222;
    background: #fff;
    margin-right: 5px;
}

.combo-layer .swatch {
    margin-left: 2px;
}

.ltype {
    width: 75px;
    height: 1px;
    background: #111;
    margin-right: 6px;
}

/* workspace */
.workspace {
    height: 650px;
    flex: none;
    display: flex;
    border-top: 1px solid #aaa;
}

.side {
    display: flex;
    flex-direction: column;
    align-items: center;
    border-right: 1px solid #aaa;
    border-bottom: 1px solid #aaa;
}

.side > svg {
    width: 20px;
    height: 20px;
    margin: 3.75px 0;
}

.side-left {
    width: 31px;
    height: 542px;
    margin-right: 3px;
}

.mtext {
    font: 22px/22px "Liberation Sans", sans-serif;
    color: #222;
    -webkit-text-stroke: .5px #222;
    margin-top: 2px;
}

.grip-h {
    flex: none;
    width: 25px;
    height: 9px;
    margin: 2px 0 1px;
    border: solid #aaa;
    border-width: 0 0 1px;
    background: linear-gradient(#fff 3px, #aaa 3px, #aaa 4px, transparent 4px, transparent 5px, #fff 5px);
}

.drawing {
    width: 1117px;
    border-left: 1px solid #888;
    border-top: 1px solid #777;
}

.view {
    display: flex;
    height: 629px;
}

.canvas {
    position: relative;
    width: 1094px;
    background: #000;
}

.scene {
    width: 1094px;
    height: 629px;
}

.prompt {
    position: absolute;
    left: 430px;
    top: 246px;
    width: 148px;
    height: 28px;
    border: 1px solid #b5b5cf;
    background: #19165a;
    display: flex;
    align-items: center;
    padding-left: 4px;
    color: #ccc9dd;
}

.prompt-text {
    font-size: 15.2px;
    line-height: 22px;
    margin-top: -3px;
    white-space: nowrap;
}

.prompt-key {
    width: 13px;
    height: 13px;
    margin-left: 19px;
}

.prompt-input {
    position: absolute;
    left: 583px;
    top: 247px;
    width: 61px;
    height: 26px;
    background: #fff;
    padding-left: 5px;
    font: 15px/24px "Noto Sans", sans-serif;
    color: #333;
}

.prompt-input::after {
    content: "";
    display: inline-block;
    width: 1px;
    height: 21px;
    background: #000;
    vertical-align: middle;
}

.vscroll {
    width: 21px;
    display: flex;
    flex-direction: column;
    align-items: center;
    border-right: 1px solid #ddd;
}

.vscroll svg, .tabs .left, .tabs .right, .command svg {
    width: 13px;
    height: 13px;
}

.up { transform: rotate(180deg); }
.left { transform: rotate(90deg); }
.right { transform: rotate(-90deg); }

.vscroll .up { margin-top: 4px; }

.thumb {
    width: 19px;
    height: 21px;
    background: #cdcdcd;
    margin-top: 100px;
}

.vscroll .down {
    margin-top: auto;
    margin-bottom: 4px;
}

.tabs {
    display: flex;
    height: 18px;
    align-items: center;
}

.tab-nav {
    width: 72px;
    height: 18px;
}

.tab-shapes {
    width: 180px;
    height: 18px;
}

.tab-label {
    font: 14.5px "Noto Sans CJK SC", sans-serif;
    fill: #222;
}

.splitter {
    width: 6px;
    height: 17px;
    background: #ccc;
    margin-left: 469px;
}

.tabs .left { margin-left: 5px; }

.hthumb {
    flex: none;
    width: 21px;
    height: 16px;
    background: #cdcdcd;
}

.tabs .hthumb { margin-left: 5px; }
.tabs .right { margin-left: 306px; }

.side-wrap {
    width: 31px;
    margin-left: 1px;
    border-left: 1px solid #fff;
}

.side-right { height: 486px; }

.side-order {
    height: 132px;
    padding-top: 3px;
}

/* command line */
.command {
    height: 79px;
    flex: none;
    padding-top: 19px;
    display: flex;
    background: linear-gradient(transparent 5px, #fff 5px, #fff 7px, #ccc 7px, #777 8px, transparent 8px);
}

.command > .grip {
    height: 51px;
    margin: 0 4px 0 8px;
}

.command-box {
    width: 1155px;
    height: 56px;
    border-left: 2px solid #888;
    border-top: 2px solid #888;
    background: #fff;
    font: 14px var(--mono);
    letter-spacing: 1.6px;
    color: #222;
}

.command-box em {
    font-size: 17px;
    letter-spacing: 3px;
}

.history, .entry {
    display: flex;
    height: 29px;
    white-space: pre;
}

.history {
    border-bottom: 1px solid #aaa;
    line-height: 24px;
}

.entry {
    height: 25px;
    line-height: 28px;
}

.mini-v {
    width: 23px;
    margin-left: auto;
    background: var(--face);
    display: flex;
    flex-direction: column;
    align-items: center;
    justify-content: center;
}

.mini-h {
    width: 107px;
    margin-left: auto;
    background: var(--face);
    display: flex;
    align-items: center;
    padding-left: 5px;
}

.mini-h .hthumb { margin-left: 4px; }
.mini-h .right { margin-left: 24px; }

/* status bar */
.status {
    flex: 1;
    display: flex;
    border-top: 1px solid #aaa;
    padding-top: 4px;
    overflow: hidden;
}

.coords {
    width: 233px;
    height: 22px;
    margin-left: 6px;
    border: 1px solid #aaa;
    border-right-color: #ccc;
    display: grid;
    grid-template-columns: 83px 83px 60px;
    padding-left: 1px;
    font: 12.4px/22px var(--mono);
    color: #111;
}

.toggles {
    display: flex;
    gap: 5px;
    margin-left: 5px;
}

.toggles span {
    width: 35px;
    height: 24px;
    padding-left: 2px;
    border: solid #bbb;
    border-width: 0 1px 1px 0;
    font: 14.8px/21px "Noto Sans CJK SC", sans-serif;
    color: #111;
    white-space: nowrap;
}

.toggles .on {
    border: solid #222;
    border-width: 1px 0 0 1px;
}

.toggles .four { width: 65px; }

.toggles .mono {
    font: 12.6px/23px var(--mono);
}

.toggles .dyn { width: 28px; }

.tray {
    margin-left: auto;
    display: flex;
    align-items: center;
    height: 23px;
    color: #111;
}

.scale-label {
    font: 14.5px/22px "Noto Sans CJK SC", sans-serif;
    white-space: nowrap;
}

.scale-value {
    font: 12.8px var(--mono);
    margin: 0 4px 0 14px;
}

.tray .caret {
    border-width: 5px 5px 0;
}

.tray .icon {
    width: 18px;
    height: 18px;
    margin: 0 0 0 14px;
}

.tray .lock-cell {
    width: 31px;
    height: 24px;
    margin-left: 12px;
    border: solid #999;
    border-width: 1px 0 0 1px;
    display: flex;
    align-items: center;
}

.tray .lock-cell .icon {
    width: 22px;
    height: 20px;
    margin-left: 3px;
}

.tray .low {
    margin: 8px 0 0 6px;
}

.tray .clean {
    width: 20px;
    height: 20px;
    margin: -4px 0 0 11px;
}

.resize {
    width: 11px;
    height: 11px;
    margin: 9px 2px 0 8px;
}

/* layer over everything */
.overlay {
    position: absolute;
    left: 0;
    top: 0;
    width: 1187px;
    height: 892px;
}

.watermark {
    font-family: "Liberation Sans", sans-serif;
    fill: rgba(255, 255, 255, .88);
    stroke: #cfcfcf;
    stroke-width: 1.2;
}

.watermark .cjk {
    font-family: "Noto Sans CJK SC", sans-serif;
}

.watermark .site {
    font-family: "Noto Sans", sans-serif;
    stroke-width: 1.4;
    paint-order: stroke;
}

.callout path {
    fill: none;
    stroke: #ed1c24;
}
```
